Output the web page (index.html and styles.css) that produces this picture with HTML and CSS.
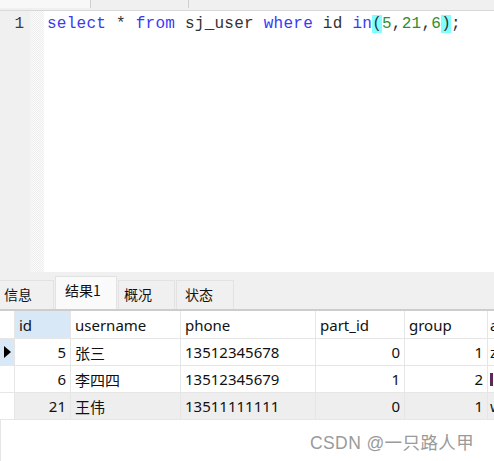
FILE: index.html
```html
<!DOCTYPE html>
<html>
<head>
<meta charset="utf-8">
<link rel="stylesheet" href="styles.css">
</head>
<body>
<div class="app">
  <div class="topbar">
    <div class="toptab first"></div>
    <div class="toptab second"></div>
  </div>
  <div class="editor">
    <div class="gutter"><span class="lineno">1</span></div>
    <div class="fold"></div>
    <div class="code"><span class="kw">select</span> * <span class="kw">from</span> sj_user <span class="kw">where</span> id <span class="kw">in</span><span class="br">(</span><span class="num">5</span>,<span class="num">21</span>,<span class="num">6</span><span class="br">)</span>;</div>
  </div>
  <div class="tabbar">
    <div class="tab">信息</div>
    <div class="tab active">结果1</div>
    <div class="tab">概况</div>
    <div class="tab">状态</div>
  </div>
  <div class="grid">
    <div class="cell head ind"></div>
    <div class="cell head sel">id</div>
    <div class="cell head">username</div>
    <div class="cell head">phone</div>
    <div class="cell head">part_id</div>
    <div class="cell head">group</div>
    <div class="cell head last">a</div>

    <div class="cell ind cur"><span class="tri"></span></div>
    <div class="cell r">5</div>
    <div class="cell">张三</div>
    <div class="cell">13512345678</div>
    <div class="cell r">0</div>
    <div class="cell r">1</div>
    <div class="cell last">z</div>

    <div class="cell ind"></div>
    <div class="cell r">6</div>
    <div class="cell">李四四</div>
    <div class="cell">13512345679</div>
    <div class="cell r">1</div>
    <div class="cell r">2</div>
    <div class="cell last"><span class="pbar"></span></div>

    <div class="cell ind"></div>
    <div class="cell r alt">21</div>
    <div class="cell alt">王伟</div>
    <div class="cell alt">13511111111</div>
    <div class="cell r alt">0</div>
    <div class="cell r alt">1</div>
    <div class="cell last alt">w</div>
  </div>
  <div class="rest"></div>
  <div class="watermark">CSDN @一只路人甲</div>
</div>
</body>
</html>
```
FILE: styles.css
```css
html, body {
  margin: 0;
  padding: 0;
  background: #ffffff;
}
body {
  width: 494px;
  height: 461px;
  overflow: hidden;
}
.app {
  position: relative;
  width: 494px;
  height: 461px;
  display: flex;
  flex-direction: column;
  font-family: "Noto Sans", "Noto Sans CJK SC", sans-serif;
}
.topbar {
  height: 10px;
  flex: none;
  background: #f0f0f0;
  border-bottom: 1px solid #d8d8d8;
  display: flex;
}
.toptab {
  height: 8px;
  border-right: 1px solid #cfcfcf;
}
.toptab.first {
  width: 90px;
  background: #f8f8f8;
}
.toptab.second {
  width: 97px;
}
.editor {
  height: 261px;
  flex: none;
  display: flex;
}
.gutter {
  width: 30px;
  background: #f0f0f0;
  flex: none;
  display: flex;
  justify-content: flex-end;
  padding-top: 2px;
  box-sizing: border-box;
}
.lineno {
  font-family: "Liberation Mono", monospace;
  font-size: 16px;
  line-height: 22px;
  height: 22px;
  color: #3c3c3c;
  padding-right: 6px;
}
.fold {
  width: 14px;
  flex: none;
  background-color: #f6f6f6;
  background-image: repeating-conic-gradient(#eeeeee 0 25%, #fbfbfb 0 50%);
  background-size: 2px 2px;
}
.code {
  flex: 1;
  padding: 2px 0 0 3px;
  font-family: "Liberation Mono", monospace;
  font-size: 16px;
  line-height: 22px;
  color: #333333;
  white-space: pre;
  letter-spacing: 0.25px;
}
.kw { color: #3a3af2; }
.num { color: #2f8f2f; }
.br { background: #80ffff; }
.tabbar {
  height: 39px;
  flex: none;
  box-sizing: border-box;
  background: #f0f0f0;
  border-bottom: 2px solid #cdcdcd;
  display: flex;
  align-items: flex-end;
  padding-top: 5px;
}
.tab {
  height: 29px;
  box-sizing: border-box;
  border: 1px solid #e2e2e2;
  border-bottom: none;
  margin-right: 1px;
  font-size: 14px;
  color: #111111;
  display: flex;
  align-items: center;
  font-family: "Noto Sans CJK SC", sans-serif;
  padding-bottom: 2px;
}
.tab:nth-child(1) { width: 54px; padding-left: 4px; border-left: none; }
.tab:nth-child(2) { width: 62px; padding-left: 9px; }
.tab:nth-child(3) { width: 57px; padding-left: 5px; }
.tab:nth-child(4) { width: 58px; padding-left: 8px; }
.tab.active {
  height: 33px;
  background: #fafafa;
  padding-bottom: 6px;
}
.grid {
  display: grid;
  grid-template-columns: 15px 56px 110px 135px 89px 83px 1fr;
  grid-template-rows: 28px 27px 27px 27px;
  flex: none;
}
.cell {
  box-sizing: border-box;
  border-right: 1px solid #e6e6e6;
  border-bottom: 1px solid #e6e6e6;
  font-size: 15px;
  color: #111111;
  display: flex;
  align-items: center;
  padding: 0 4px;
  overflow: hidden;
  white-space: nowrap;
  background: #ffffff;
}
.cell.r { justify-content: flex-end; }
.cell.head { background: #ffffff; }
.cell.sel { background: #d9e8f6; }
.cell.ind { padding: 0; }
.cell.cur { background: #d9e8f6; }
.cell.alt { background: #eeeeee; }
.cell.last { border-right: none; padding: 0 0 0 2px; }
.tri {
  width: 0;
  height: 0;
  margin-left: 4px;
  border-top: 6px solid transparent;
  border-bottom: 6px solid transparent;
  border-left: 7px solid #000000;
}
.pbar {
  display: block;
  width: 3px;
  height: 13px;
  background: #5a2a5a;
}
.rest {
  flex: 1;
  border-left: 1px solid #e6e6e6;
}
.watermark {
  position: absolute;
  left: 310px;
  top: 429px;
  font-family: "Liberation Sans", "Noto Sans CJK SC", sans-serif;
  font-size: 17.5px;
  color: #9a9a9a;
  letter-spacing: 0.4px;
}
```
